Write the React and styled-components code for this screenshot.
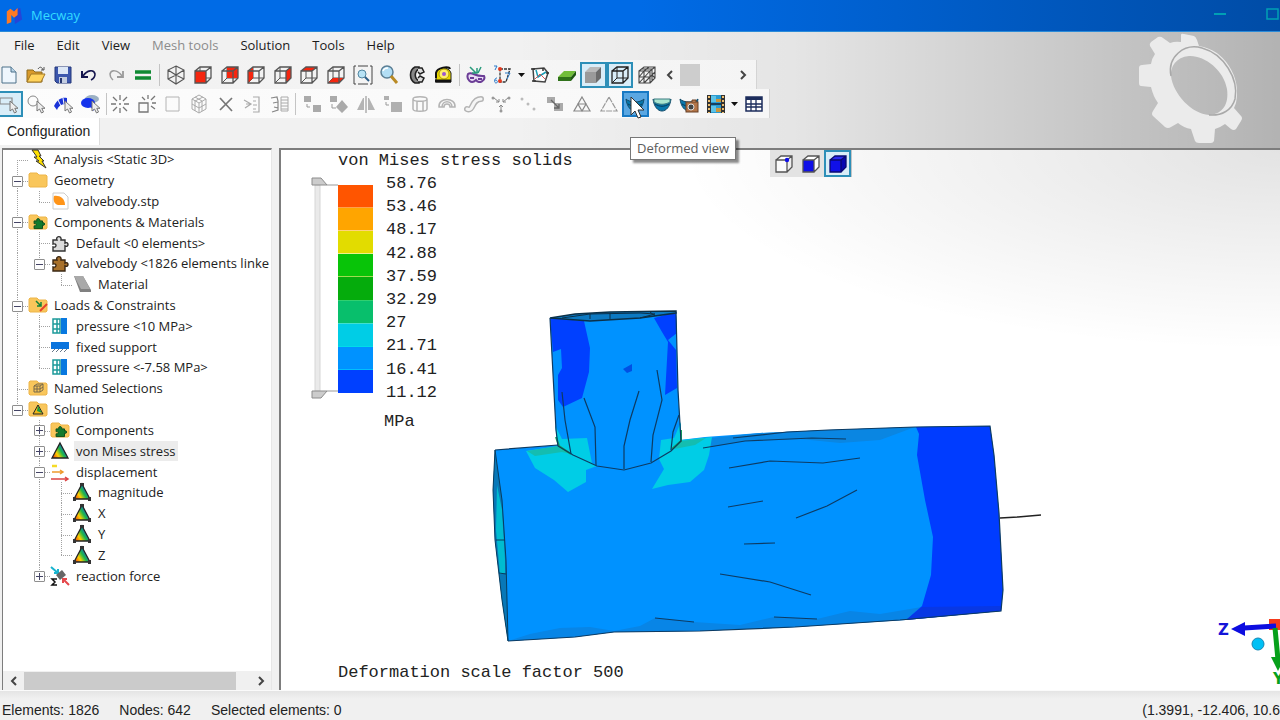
import React from 'react';
import styled, { createGlobalStyle, css } from 'styled-components';

const GlobalStyle = createGlobalStyle`
  * { box-sizing: border-box; }
  body {
    margin: 0;
    overflow: hidden;
    background: #f0f0f0;
  }
  button { font: inherit; color: inherit; }
`;

const Window = styled.div`
  display: flex;
  flex-direction: column;
  min-height: 100vh;
  overflow: hidden;
  color: #222;
  font-family: "Open Sans", "Noto Sans", sans-serif;
  font-size: 13px;
`;

const TitleBar = styled.header`
  display: flex;
  align-items: center;
  height: 32px;
  padding-left: 5px;
  gap: 8px;
  background: linear-gradient(to right, #006be6 50%, #005fcd 70%, #004ca6);
  border-bottom: 1px solid #2b8bd8;
  color: #35dcff;
  white-space: nowrap;
`;

const AppName = styled.h1`
  flex: 1;
  margin: 0;
  padding-bottom: 2px;
  font-size: 13px;
  font-weight: 400;
  line-height: 20px;
`;

const WindowButton = styled.button`
  display: flex;
  align-items: center;
  justify-content: flex-end;
  flex: none;
  width: ${props => props.$width}px;
  height: 28px;
  padding: 0 0 2px;
  border: none;
  background: transparent;
  color: #00a0b4;
`;

const Chrome = styled.div`
  position: relative;
  background: linear-gradient(to right, rgba(0, 0, 0, 0) 40%, rgba(0, 0, 0, 0.05) 62%, rgba(0, 0, 0, 0.17) 84%, rgba(0, 0, 0, 0.26)), #f1f1f1;
`;

const Watermark = styled.svg`
  position: absolute;
  right: 36px;
  top: 1px;
`;

const MenuBar = styled.nav`
  display: flex;
  height: 28px;
  padding-left: 3px;
`;

const MenuItem = styled.button`
  padding: 0 11px 2px;
  border: none;
  background: transparent;
  color: ${props => (props.disabled ? '#8c8c8c' : '#1c1c1c')};
`;

const ToolRow = styled.div`
  display: flex;
  align-items: center;
  width: ${props => props.$width}px;
  height: 29px;
  margin-left: -4px;
  background: linear-gradient(to right, #f0f0f0, rgba(250, 250, 250, 0.7));
  border-right: 1px solid #d4d4d4;
  ${props => props.$light && css`
    background: linear-gradient(to right, #fcfcfc, rgba(250, 250, 250, 0.8));
  `}
`;

const ToolGroup = styled.div`
  display: grid;
  flex: none;
  grid-auto-flow: column;
  grid-auto-columns: 1fr;
  width: ${props => props.$width}px;
`;

const Divider = styled.span`
  flex: none;
  width: 1px;
  height: 22px;
  margin: 0 ${props => (props.$tight ? 0 : 3)}px 0 3px;
  background: #c4c4c4;
`;

const ToolButton = styled.button`
  position: relative;
  display: flex;
  align-items: center;
  justify-content: center;
  height: 26px;
  padding: 0;
  border: 2px solid transparent;
  background: transparent;
  ${props => props.$on && css`
    border-color: #2d8fb8;
    background: #d9edf8;
  `}
  ${props => props.$hot && css`
    border-color: #1779c4;
    background: #5aa7e2;
  `}
`;

const SmallButton = styled.button`
  display: flex;
  align-items: center;
  justify-content: center;
  flex: none;
  width: ${props => props.$width}px;
  height: 18px;
  padding: 0;
  border: none;
  background: transparent;
`;

const Stepper = styled.div`
  display: flex;
  align-items: center;
  flex: 1;
  padding: 0 6px 0 3px;
  gap: 3px;
`;

const StepThumb = styled.span`
  width: 20px;
  height: 22px;
  margin-right: auto;
  background: #cdcdcd;
`;

const Cursor = styled.svg`
  position: absolute;
  left: 6px;
  top: 3px;
  z-index: 3;
`;

const Tooltip = styled.div`
  position: absolute;
  left: 630px;
  bottom: -12px;
  z-index: 4;
  padding: 0 6px;
  border: 1px solid #777;
  background: #fff;
  box-shadow: 3px 3px 2px rgba(0, 0, 0, 0.45);
  color: #5c5c5c;
  line-height: 21px;
`;

const TabStrip = styled.div`
  display: flex;
  height: 30px;
  padding-bottom: 3px;
`;

const Tab = styled.button`
  padding: 0 9px 1px 7px;
  border: none;
  border-right: 1px solid #ddd;
  background: #fff;
  font-family: "Liberation Sans", Arial, sans-serif;
  font-size: 14px;
`;

const Workspace = styled.main`
  display: flex;
  flex: 1;
  gap: 7px;
  padding-left: 2px;
`;

const SidePanel = styled.aside`
  display: flex;
  flex-direction: column;
  justify-content: space-between;
  flex: none;
  width: 270px;
  border-top: 2px solid #7d7d7d;
  border-left: 1px solid #7d7d7d;
  border-right: 1px solid #e6e6e6;
  background: #fff;
`;

const Tree = styled.ul`
  display: grid;
  grid-auto-rows: 1fr;
  height: 437px;
  margin: -1px 0 0;
  padding: 0 0 0 3px;
  overflow: hidden;
  list-style: none;
`;

const TreeRow = styled.li`
  display: flex;
  align-items: stretch;
  white-space: nowrap;
`;

const dots = (to) => `repeating-linear-gradient(${to}, #a2a2a2 0 1px, transparent 1px 2px)`;

// $line: "|" runs through, "T" branches, "L" ends here, "F" starts here
const Guide = styled.span`
  display: flex;
  align-items: center;
  justify-content: center;
  flex: none;
  width: 22px;
  background-repeat: no-repeat;
  ${props => props.$line === '|' && css`
    background-image: ${dots('to bottom')};
    background-size: 1px 100%;
    background-position: 11px 0;
  `}
  ${props => props.$line === 'T' && css`
    background-image: ${dots('to bottom')}, ${dots('to right')};
    background-size: 1px 100%, 11px 1px;
    background-position: 11px 0, 11px 11px;
  `}
  ${props => props.$line === 'L' && css`
    background-image: ${dots('to bottom')}, ${dots('to right')};
    background-size: 1px 11px, 11px 1px;
    background-position: 11px 0, 11px 11px;
  `}
  ${props => props.$line === 'F' && css`
    background-image: ${dots('to bottom')}, ${dots('to right')};
    background-size: 1px 11px, 11px 1px;
    background-position: 11px 11px, 11px 11px;
  `}
`;

const Expander = styled.button`
  display: flex;
  align-items: center;
  justify-content: center;
  width: 11px;
  height: 11px;
  margin-top: 2px;
  padding: 0;
  border: 1px solid #8f8f8f;
  border-radius: 1px;
  background: #fdfdfd;
`;

const NodeIcon = styled.span`
  display: flex;
  align-items: center;
  flex: none;
  width: 20px;
  margin-right: 4px;
`;

const NodeLabel = styled.span`
  align-self: center;
  padding: 0 2px;
  line-height: 20px;
  background: ${props => (props.$selected ? '#ececec' : 'transparent')};
`;

const ScrollBar = styled.div`
  display: flex;
  align-items: center;
  height: 19px;
  background: #f0f0f0;
`;

const ScrollTrack = styled.div`
  display: flex;
  flex: 1;
  height: 18px;
  padding-right: 14px;
`;

const ScrollThumb = styled.span`
  flex: 1;
  background: #cbcbcb;
`;

const Viewport = styled.section`
  position: relative;
  display: flex;
  flex-direction: column;
  flex: 1;
  min-width: 0;
  border-top: 2px solid #7d7d7d;
  border-left: 2px solid #7d7d7d;
  background: radial-gradient(ellipse 600px 200px at 100% 0, rgba(0, 0, 0, 0.11), rgba(0, 0, 0, 0)), #fff;
  font-family: "Liberation Mono", "Courier New", monospace;
  font-size: 17px;
`;

const Scene = styled.svg`
  position: absolute;
  left: 0;
  top: 0;
  width: 100%;
  height: 100%;
`;

const PlotLine = styled.p`
  margin: 0;
  padding-left: ${props => props.$inset}px;
  line-height: 22px;
  ${props => props.$bottom && css`
    margin-top: auto;
    margin-bottom: 6px;
  `}
`;

const Legend = styled.div`
  display: flex;
  padding-left: 30px;
  margin-bottom: 7px;
`;

const RangeMark = styled.svg`
  margin: 5px 0 0;
`;

const Bands = styled.div`
  display: flex;
  flex-direction: column;
  width: 35px;
  height: 208px;
  margin: 13px 13px 0 0;
`;

const Band = styled.span`
  flex: 1;
  border-bottom: 1px solid ${props => props.$edge};
  background: ${props => props.$color};
`;

const Values = styled.ol`
  display: grid;
  grid-auto-rows: 1fr;
  height: 232px;
  margin: 0;
  padding: 0;
  list-style: none;
  line-height: 23px;
`;

const ViewTools = styled.div`
  position: absolute;
  left: 489px;
  top: 0;
  display: flex;
  background: #e3e3e3;
  border-right: 1px solid #c4c4c4;

  button { width: 27px; height: 27px; }
`;

const StatusBar = styled.footer`
  display: flex;
  align-items: center;
  height: 30px;
  padding: 8px 0 0 2px;
  gap: 20px;
  border-top: 1px solid #fafafa;
  background: linear-gradient(#e4e4e4, #f0f0f0 8px);
  font-family: "Liberation Sans", Arial, sans-serif;
  font-size: 14px;
  white-space: nowrap;
`;

const Coordinates = styled.span`
  margin-left: auto;
`;

const Svg = ({ size = 20, children, ...rest }) => (
  <svg width={size} height={size} viewBox="0 0 20 20" fill="none" aria-hidden="true" {...rest}>
    {children}
  </svg>
);

const FACES = {
  front: '2 6 13 6 13 18 2 18',
  back: '7 2 18 2 18 13 7 13',
  left: '2 6 7 2 7 13 2 18',
  right: '13 6 18 2 18 13 13 18',
  top: '2 6 7 2 18 2 13 6',
  bottom: '2 18 7 13 18 13 13 18',
};

const Cube = ({ face, color = '#f5260f', line = '#555', open = true, fills = {}, node }) => (
  <Svg>
    {Object.keys(fills).map(f => <polygon key={f} points={FACES[f]} fill={fills[f]} />)}
    {open && <path d="M7 2v11H18M7 13L2 18" stroke={line} />}
    {face && <polygon points={FACES[face]} fill={color} />}
    <path d="M2 6H13V18H2ZM2 6L7 2H18V13L13 18M13 6L18 2" stroke={line} strokeWidth="1.300" />
    {node && <circle cx="13" cy="6" r="2.200" fill="#1010e8" />}
  </Svg>
);

const Pointer = ({ x = 0, y = 0 }) => (
  <path transform={`translate(${x} ${y})`} d="M0 0V10L2.500 8L4.500 12L6.500 11L4.800 7.300H8Z" fill="#eee" stroke="#777" />
);

const Bowl = () => (
  <>
    <path d="M1 5C5 9 15 9 19 5C18 13 14 17 10 17S2 13 1 5Z" fill="#0878ad" stroke="#124a68" />
    <path d="M3 10C8 13 12 13 17 10" stroke="#073a5a" />
  </>
);

const PUZZLE = 'M3 7H7C5 3 12 2 11 7H15V10C19 8 19 15 15 13V18H3V14C7 15 7 10 3 11Z';

const art = {
  newFile: <Svg><path d="M3 2H12L17 7V18H3Z" fill="#eef6fd" stroke="#4d7089" /><path d="M12 2V7H17" fill="#b9d3e6" stroke="#4d7089" /></Svg>,
  open: <Svg><path d="M1 17V5H7L9 7H16V17Z" fill="#d99a2b" stroke="#8d6a1e" /><path d="M1 17L5 9H19L15 17Z" fill="#ffd35c" stroke="#a27825" /><path d="M12 4C14 1 16 2 17 5M15 5H18V2" stroke="#555" /></Svg>,
  save: <Svg><path d="M2 2H18V18H4L2 16Z" fill="#3c57ad" stroke="#25387a" /><path d="M5 2H15V9H5Z" fill="#dce7f6" /><path d="M6 12H14V18H6Z" fill="#c3cde0" /><path d="M7 13H9V18H7Z" fill="#26366f" /></Svg>,
  undo: <Svg><path d="M3 6V12H9" stroke="#16164e" strokeWidth="2" /><path d="M4 11C8 5 15 4 16 9C16 13 14 14 12 15" stroke="#16164e" strokeWidth="1.600" /></Svg>,
  redo: <Svg><path d="M17 6V12H11" stroke="#9a9a9a" strokeWidth="1.800" /><path d="M16 11C12 5 5 4 4 9C4 13 6 14 7 15" stroke="#9a9a9a" strokeWidth="1.500" /></Svg>,
  solve: <Svg><path d="M2 7H18M2 13H18" stroke="#0f8a33" strokeWidth="3.500" /></Svg>,
  iso: <Svg><path d="M10 1L18 5V14L10 19L2 14V5ZM2 5L10 10L18 5M10 10V19M10 1V10M2 14L10 10L18 14" stroke="#555" strokeWidth="1.100" /></Svg>,
  fit: <Svg><path d="M3 1H1V19H3M17 1H19V19H17M5 1H15M5 19H15" stroke="#444" /><circle cx="9" cy="9" r="4" fill="#b7e2f5" stroke="#5186a0" /><path d="M12 12L16 16" stroke="#2d5d86" strokeWidth="2" /></Svg>,
  zoom: <Svg><circle cx="8" cy="7" r="6" fill="#b2def5" stroke="#5b7f95" strokeWidth="1.500" /><path d="M4 6C5 3 8 3 9 3" stroke="#fff" strokeWidth="1.500" /><path d="M12 11L18 18" stroke="#b98a24" strokeWidth="3" /></Svg>,
  caliper: <Svg><path d="M13 2H9C3 5 3 15 9 18H13V16C8 13 8 7 13 4Z" stroke="#222" strokeWidth="1.600" fill="#888" /><path d="M12 3L16 3L18 7L14 9L12 7M12 17H16L18 13L14 11L12 13" stroke="#222" strokeWidth="1.500" fill="#ddd" /></Svg>,
  tape: <Svg><path d="M3 17V8C4 2 16 1 18 8V17Z" fill="#e9d800" stroke="#222" /><path d="M3 13V8C4 2 16 1 17 4" stroke="#111" strokeWidth="2" /><circle cx="11" cy="9" r="5" fill="#fff06a" stroke="#b09e00" /><circle cx="11" cy="9" r="2" fill="#9b58d0" /><path d="M2 16H18" stroke="#111" strokeWidth="3" /></Svg>,
  mask: <Svg><path d="M2 9C6 6 9 12 18 11C20 15 13 20 10 15C5 20 0 14 2 9Z" stroke="#6b3d96" fill="#eadcf5" strokeWidth="2" /><path d="M4 13H8M12 14H16" stroke="#6b3d96" strokeWidth="2" /><path d="M4 2L10 8M15 2L12 8M6 8H11V3" stroke="#2a9b7c" strokeWidth="1.500" /></Svg>,
  nodes: <Svg><path d="M7 4H17L13 17H7Z" stroke="#333" strokeWidth="1.300" strokeDasharray="3 1" /><circle cx="7" cy="4" r="2" fill="#e33a1f" /><circle cx="7" cy="16" r="2" fill="#e33a1f" /><path d="M1 1H4L2 5M12 8H17L14 14M4 13C1 13 1 18 3 18S5 15 2 15" stroke="#2878c8" /></Svg>,
  graph: <Svg><path d="M3 4L14 3L18 8L15 17L4 16Z" stroke="#444" strokeWidth="1.500" fill="#fff" /><path d="M6 5L8 12L16 7" stroke="#1d9db4" strokeWidth="1.500" /><path d="M5 14L10 9L15 14" stroke="#d35555" /><path d="M1 4H5M13 3V6M16 8H19M2 16H6" stroke="#333" strokeWidth="1.500" /></Svg>,
  slab: <Svg><path d="M1 12L7 6H19L14 12Z" fill="#72bd3a" /><path d="M1 12H14V16H1Z" fill="#2f711a" /><path d="M14 12L19 6V10L14 16Z" fill="#1f5712" /></Svg>,
  solid: <Svg><path d="M2 7L7 2H18L13 7Z" fill="#b9b9b9" /><path d="M2 7H13V18H2Z" fill="#9a9a9a" /><path d="M13 7L18 2V13L13 18Z" fill="#6b6b6b" /></Svg>,
  mesh: <Svg><path d="M2 6H13V18H2ZM2 6L7 2H18V13L13 18M13 6L18 2M2 12H13L18 7M7 6V18M4 4H15V16M12 2L7 6M2 18L13 6M2 12L7 6M7 18L13 12M15 10L18 13" stroke="#444" strokeWidth="1.100" /></Svg>,
  selRect: <Svg><path d="M1 4H13V10H1Z" stroke="#888" strokeWidth="1.200" /><Pointer x={11} y={7} /></Svg>,
  selCircle: <Svg><circle cx="7" cy="7" r="5" stroke="#888" /><Pointer x={11} y={7} /></Svg>,
  selFaces: <Svg><path d="M1 12C5 4 10 3 14 4V10C9 10 6 11 4 16Z" fill="#1a33d8" /><path d="M5 6L8 12M10 4L11 10" stroke="#fff" /><Pointer x={12} y={7} /></Svg>,
  selBody: <Svg><ellipse cx="12" cy="5" rx="7" ry="4" fill="#9bb0c4" /><ellipse cx="8" cy="9" rx="7" ry="5" fill="#1533ec" /><path d="M9 11H14V17Z" fill="#1533ec" /><Pointer x={12} y={7} /></Svg>,
  spark: <Svg><path d="M10 1V6M10 14V19M1 10H6M14 10H19M3 3L7 7M13 13L17 17M17 3L13 7M7 13L3 17" stroke="#777" strokeWidth="1.300" /><circle cx="10" cy="10" r="1" fill="#777" /></Svg>,
  newElement: <Svg><path d="M2 9H11V18H2Z" stroke="#777" strokeWidth="1.300" /><path d="M11 1V5M5 3L8 6M18 2L14 6M15 9H19M14 12L18 15" stroke="#777" strokeWidth="1.300" /></Svg>,
  square: <Svg><path d="M3 3H16V17H3Z" stroke="#b4b4b4" /></Svg>,
  hexa: <Svg><path d="M10 1L17 5V15L10 19L3 15V5ZM3 5L10 9L17 5M10 9V19M6 3L13 7V17M14 3L6 7V17M3 10L10 14L17 10" stroke="#aaa" /></Svg>,
  cross: <Svg><path d="M4 4L16 17M16 4L4 16" stroke="#777" strokeWidth="1.700" /></Svg>,
  merge: <Svg><path d="M2 6L9 10L3 14M9 10H4M11 3H17V18H11M11 7H14M11 11H15M11 15H14" stroke="#aaa" strokeWidth="1.200" /></Svg>,
  renumber: <Svg><path d="M2 4L8 3L9 7V16L3 18M9 8L4 9M9 14L5 13" stroke="#888" strokeWidth="1.200" /><path d="M12 3H19V17H12ZM12 6H19M12 9H19M12 12H19M12 15H19" stroke="#aaa" /></Svg>,
  move: <Svg><path d="M2 2H9V8H2ZM11 11H19V18H11Z" fill="#aaa" /><path d="M5 10V13H8" stroke="#999" /></Svg>,
  rotate: <Svg><path d="M1 2H8V8H1ZM13 6L19 13L13 19L7 13Z" fill="#aaa" /><path d="M3 10V14H7" stroke="#999" /></Svg>,
  mirror: <Svg><path d="M1 16L7 4H8V16ZM12 4H13L19 16H12Z" fill="#b4b4b4" /><path d="M10 2V19" stroke="#888" /></Svg>,
  scale: <Svg><path d="M1 2H6V6H1ZM8 8H19V18H8Z" fill="#b0b0b0" /><path d="M3 8V11H6" stroke="#999" /></Svg>,
  extrude: <Svg><path d="M3 5C3 2 17 2 17 5V15C17 18 3 18 3 15ZM3 5C3 8 17 8 17 5M7 7V17M13 7V17" stroke="#b4b4b4" strokeWidth="1.500" /></Svg>,
  revolve: <Svg><path d="M2 13C1 3 19 3 18 13H13C13 9 7 9 7 13ZM5 13C5 6 15 6 15 13" stroke="#b4b4b4" strokeWidth="1.500" /></Svg>,
  sweep: <Svg><path d="M3 15C10 18 7 5 17 5" stroke="#b4b4b4" strokeWidth="6" strokeLinecap="round" /><path d="M3 15C10 18 7 5 17 5" stroke="#f5f5f5" strokeWidth="3" strokeLinecap="round" /></Svg>,
  join: <Svg><path d="M3 4L8 8M17 4L12 8M10 18V11M8 13L10 11L12 13M5 8H8V5M15 8H12V5" stroke="#888" /><circle cx="2" cy="4" r="1.500" fill="#999" /><circle cx="18" cy="4" r="1.500" fill="#999" /><circle cx="10" cy="17" r="1.500" fill="#999" /></Svg>,
  points: <Svg><circle cx="4" cy="5" r="1.500" fill="#bbb" /><circle cx="10" cy="10" r="1.500" fill="#bbb" /><circle cx="16" cy="15" r="1.500" fill="#bbb" /></Svg>,
  refine: <Svg><path d="M2 3H10V9H2ZM9 9H18V17H9Z" fill="#aaa" /><path d="M6 6L14 14M14 10V14H9" stroke="#666" strokeWidth="1.300" /></Svg>,
  tri4: <Svg><path d="M10 3L18 17H2ZM6 10H14L10 17Z" stroke="#888" strokeWidth="1.200" /></Svg>,
  tri: <Svg><path d="M10 3L18 17H2Z" stroke="#999" strokeWidth="1.200" strokeDasharray="6 1" /></Svg>,
  deformed: <Svg><Bowl /></Svg>,
  undeformed: <Svg><Bowl /><path d="M2 5H18V8C13 11 7 11 2 8Z" fill="#a9e4cf" stroke="#3c7c83" /></Svg>,
  snapshot: <Svg><Bowl /><rect x="7" y="8" width="12" height="10" fill="#b47649" stroke="#684027" /><path d="M13 8V6H17V8" fill="#b47649" stroke="#684027" /><circle cx="12" cy="13" r="3" fill="#444" stroke="#ddd" /></Svg>,
  film: <Svg><path d="M1 1H19V19H1Z" fill="#333" /><path d="M5 1H15V19H5Z" fill="#2a9bd0" /><path d="M5 9H15V11H5Z" fill="#173f5e" /><path d="M5 2H10V8H5ZM5 12H10V18H5Z" fill="#5cc3e8" /><path d="M10 5H15V8H10ZM10 14H15V18H10Z" fill="#c8963c" /><path d="M3 2V19M17 2V19" stroke="#f0c070" strokeWidth="2" strokeDasharray="2 2" /></Svg>,
  table: <Svg><path d="M2 3H18V17H2Z" fill="#fff" stroke="#1c2d5c" strokeWidth="1.500" /><path d="M2 3H18V6H2Z" fill="#1c2d5c" /><path d="M2 10H18M2 13H18M7 4V17M12 4V17" stroke="#1c2d5c" strokeWidth="1.300" /></Svg>,
};

const Folder = ({ children }) => (
  <Svg>
    <path d="M1 4L2 3H9L11 5H18L19 6V16L18 17H2L1 16Z" fill="#f9c65b" stroke="#edb54a" />
    {children}
  </Svg>
);

const Puzzle = ({ fill = '#ddd', line = '#333' }) => (
  <path d={PUZZLE} fill={fill} stroke={line} strokeWidth="1.400" />
);

const StressTriangle = ({ nodes }) => (
  <Svg>
    <defs>
      <linearGradient id="contour" x1="0" y1="1" x2="1" y2="0.400">
        <stop offset="0" stopColor="#e51e10" />
        <stop offset="0.350" stopColor="#ffd000" />
        <stop offset="0.600" stopColor="#20b848" />
        <stop offset="0.900" stopColor="#1060d8" />
      </linearGradient>
    </defs>
    <path d="M10 2L18 17H2Z" fill="url(#contour)" stroke="#222" strokeWidth="1.300" />
    {nodes && <path d="M8 1H12V4H8ZM1 15H4V19H1ZM16 15H19V19H16Z" fill="#333" />}
  </Svg>
);

const Pressure = () => (
  <Svg>
    <path d="M11 2H17V18H11Z" fill="#0878e0" />
    <path d="M3 3H10V17H3ZM3 8H10M3 13H10M7 3V17" stroke="#1d9a9a" strokeWidth="1.500" />
  </Svg>
);

const nodeArt = {
  analysis: <Svg><path d="M4 1H10L13 7H11L16 12H14L18 19L8 12H11L6 8H9Z" fill="#ffe100" stroke="#333" /></Svg>,
  folder: <Folder />,
  stp: <Svg><path d="M3 2H14L18 6V18H3Z" fill="#fff" stroke="#ccc" /><path d="M4 5C9 4 15 7 15 14H8C4 13 3 9 4 5Z" fill="#ff9418" /></Svg>,
  components: <Folder><g transform="translate(4 4) scale(0.700)"><Puzzle fill="#127a2c" line="#0b4d1b" /></g></Folder>,
  part: <Svg><Puzzle /></Svg>,
  partBrown: <Svg><Puzzle fill="#a8712b" line="#3a2713" /></Svg>,
  material: <Svg><path d="M2 2H11L19 16V18H8Z" fill="#808080" /><path d="M2 2H11L18 15H9Z" fill="#a9a9a9" /></Svg>,
  loads: <Folder><path d="M8 6L13 11M13 7V11H9" stroke="#11823a" strokeWidth="1.500" /><path d="M12 16L19 9" stroke="#e5412a" strokeWidth="2" /></Folder>,
  pressure: <Pressure />,
  support: <Svg><path d="M1 5H19V12H1Z" fill="#0a74dd" /><path d="M2 15L5 12M6 15L9 12M10 15L13 12M14 15L17 12" stroke="#678" /></Svg>,
  named: <Folder><path d="M6 8H12V14H6ZM6 8L9 6H15V12L12 14M12 8L15 6M6 11H12L15 9M9 8V14" stroke="#77684a" /></Folder>,
  solution: <Folder><path d="M10 6L15 15H5Z" fill="#f2b818" stroke="#222" /><path d="M10 7L14 14L9 12Z" fill="#179a41" /></Folder>,
  stress: <StressTriangle />,
  scalar: <StressTriangle nodes />,
  displacement: <Svg><path d="M2 4H7" stroke="#f5db28" strokeWidth="2.500" /><path d="M2 10H13M10 8L13 10L10 12" stroke="#ee9a2e" strokeWidth="1.500" /><path d="M1 17H18M15 15L18 17L15 19" stroke="#dc4444" strokeWidth="1.500" /></Svg>,
  reaction: <Svg><path d="M1 1L8 7M8 3V7H4" stroke="#18b4cf" strokeWidth="2" /><path d="M6 9L12 4L16 9L10 14Z" fill="#666" /><path d="M19 19L13 13M13 17V13H17" stroke="#e5484c" strokeWidth="2" /><path d="M7 13H2L5 16L2 19H7" stroke="#111" strokeWidth="1.500" /></Svg>,
};

const nodes = [
  ['F', 'analysis', 'Analysis <Static 3D>'],
  ['T', 'folder', 'Geometry', '-'],
  ['|L', 'stp', 'valvebody.stp'],
  ['T', 'components', 'Components & Materials', '-'],
  ['|T', 'part', 'Default <0 elements>'],
  ['|L', 'partBrown', 'valvebody <1826 elements linke', '-'],
  ['| L', 'material', 'Material'],
  ['T', 'loads', 'Loads & Constraints', '-'],
  ['|T', 'pressure', 'pressure <10 MPa>'],
  ['|T', 'support', 'fixed support'],
  ['|L', 'pressure', 'pressure <-7.58 MPa>'],
  ['T', 'named', 'Named Selections'],
  ['L', 'solution', 'Solution', '-'],
  [' T', 'components', 'Components', '+'],
  [' T', 'stress', 'von Mises stress', '+'],
  [' T', 'displacement', 'displacement', '-'],
  [' |T', 'scalar', 'magnitude'],
  [' |T', 'scalar', 'X'],
  [' |T', 'scalar', 'Y'],
  [' |L', 'scalar', 'Z'],
  [' L', 'reaction', 'reaction force', '+'],
];

const bands = [
  ['#ff5500', '#ffa04a'],
  ['#ffa500', '#ffd27a'],
  ['#e2dc00', '#eef08a'],
  ['#08c408', '#a0dc50'],
  ['#05ac0c', '#30d070'],
  ['#08bf6c', '#40e0d0'],
  ['#00cde6', '#00dcea'],
  ['#0092ff', '#00c0ff'],
  ['#0040ff', '#0040ff'],
];

const values = ['58.76', '53.46', '48.17', '42.88', '37.59', '32.29', '27', '21.71', '16.41', '11.12'];

const Tools = ({ width, items }) => (
  <ToolGroup $width={width}>
    {items.map(([name, label, on]) => (
      <ToolButton key={label} type="button" aria-label={label} $on={on}>
        {typeof name === 'string' ? art[name] : name}
      </ToolButton>
    ))}
  </ToolGroup>
);

const Caret = ({ label }) => (
  <SmallButton type="button" $width={11} aria-label={label}>
    <svg width="7" height="4" viewBox="0 0 7 4"><path d="M0 0H7L3.500 4Z" fill="#111" /></svg>
  </SmallButton>
);

const Chevron = ({ right }) => (
  <svg width="8" height="10" viewBox="0 0 8 10" fill="none">
    <path d={right ? 'M2 1L6 5L2 9' : 'M6 1L2 5L6 9'} stroke="#444" strokeWidth="2" />
  </svg>
);

const TreeNode = ({ node: [lines, icon, label, toggle] }) => (
  <TreeRow role="treeitem" aria-level={lines.length} aria-expanded={toggle ? toggle === '-' : undefined}>
    {lines.split('').map((line, i) => (
      <Guide key={i} $line={line}>
        {toggle && i === lines.length - 1 && (
          <Expander type="button" aria-label={`Toggle ${label}`}>
            <svg width="7" height="7" viewBox="0 0 7 7">
              <path d={toggle === '+' ? 'M0 3H7V4H0ZM3 0H4V7H3Z' : 'M0 3H7V4H0Z'} fill="#446" />
            </svg>
          </Expander>
        )}
      </Guide>
    ))}
    <NodeIcon>{nodeArt[icon]}</NodeIcon>
    <NodeLabel $selected={label === 'von Mises stress'}>{label}</NodeLabel>
  </TreeRow>
);

const Gear = () => (
  <Watermark width="106" height="112" viewBox="1138 33 106 112" aria-hidden="true">
    <path
      fillRule="evenodd"
      fill="#ebebeb"
      d="M1181 35Q1181 33 1184 34L1194 36Q1196 37 1197 40L1199 46Q1218 49 1229 66Q1240 83 1236 103L1234 108L1241 116Q1243 118 1241 121L1236 129Q1234 131 1231 129L1225 124Q1221 127 1215 129L1214 141Q1213 143 1211 143L1199 143Q1196 143 1195 141L1191 129Q1184 128 1178 123L1171 127Q1168 129 1165 127L1153 116Q1151 114 1153 111L1158 103Q1153 96 1151 87L1141 86Q1139 86 1139 83V68Q1139 65 1142 65L1151 64Q1152 58 1155 54L1150 46Q1149 44 1151 42L1158 37Q1161 36 1163 38L1170 43Q1175 41 1181 42ZM1189 56C1176 57 1170 67 1171 76C1173 94 1192 114 1209 115C1223 114 1229 104 1227 89C1224 70 1204 55 1189 56Z"
    />
    <path d="M1171 76C1167 57 1184 43 1202 48C1224 54 1239 79 1235 99C1232 110 1222 116 1209 115" fill="none" stroke="#a9a9a9" strokeWidth="1.500" />
  </Watermark>
);

const Model = () => (
  <Scene viewBox="281 150 999 540" preserveAspectRatio="xMinYMin meet" role="img" aria-label="Valve body stress plot">
    {/* main pipe */}
    <path d="M495 450L558 445L680 440L705 437L760 433L828 430L915 427L990 426L994 455L999 513L1003 590L1001 611L900 620L795 627L700 631L614 632L575 637L508 641L502 600L495 540L493 490Z" fill="#0092ff" />
    <path d="M712 438L760 433L828 430L915 427L880 440L840 443L800 439L745 441L705 448Z" fill="#0a86e2" />
    <path d="M508 641L530 634L560 628L590 627L614 631L640 626L655 618L694 622L740 625L774 617L817 619L850 611L880 614L922 607L906 620L795 627L700 631L614 632L575 637Z" fill="#0885e6" />
    <path d="M916 427L990 426L994 455L999 513L1003 590L1001 611L906 620L922 606L931 575L933 537L925 500L917 455L919 434Z" fill="#003cff" />
    <path d="M922 607L1001 606V611L906 620Z" fill="#0838e4" />
    {/* open left end */}
    <path d="M495 450L502 500L506 560L508 641L502 600L495 540L493 490Z" fill="#0878b8" />
    <path d="M497 485L502 510L505 560V573L500 574L496 530Z" fill="#00bcd0" />
    <path d="M495 450L502 500L506 560L508 641L502 600L495 540L493 490ZM496 540H505M499 573L506 574" fill="none" stroke="#083d5e" />
    {/* branch */}
    <path d="M550 318L556 430L558 446L573 455L597 466L624 470L651 463L671 451L681 441L678 390L676 312Z" fill="#0092ff" />
    <path d="M550 318L584 321L590 348L589 372L582 398L563 407L558 400L558 375L562 368L561 349L553 352Z" fill="#0040ff" />
    <path d="M654 318L676 312L677 333L668 340L676 350L677 388L665 395L668 342L662 332Z" fill="#0040ff" />
    <path d="M623 369L632 364V371L627 373Z" fill="#0050e4" />
    <path d="M526 451L558 446L555 425L562 439L587 438L592 463L597 466L586 470L586 482L568 492L554 480L535 468Z" fill="#00cde6" />
    <path d="M681 422L674 438L661 440L659 459L664 469L652 489L668 485L690 482L704 470L709 455L712 437L681 440Z" fill="#00cde6" />
    <path d="M527 451L558 446L571 454L562 452L535 456ZM681 441L706 438L695 445L674 449Z" fill="#14bdb0" />
    <path d="M556 437L559 446L571 454M681 430V441L672 449" fill="none" stroke="#16a35c" strokeWidth="2" />
    <path d="M550 318L575 314L610 312L676 311V313L640 318L590 321Z" fill="#0c79c2" stroke="#0b3048" strokeWidth="1.500" />
    <path d="M562 318L590 314L640 313L655 314L640 318M590 314V319M610 313V319M650 312L655 316" fill="none" stroke="#0b3048" />
    {/* feature edges */}
    <g fill="none" stroke="#0d3b63" strokeWidth="1.200">
      <path d="M550 318L556 430L558 446L573 455L597 466L624 470L651 463L671 451L681 441L678 390L676 312" />
      <path d="M562 392L565 420L571 454M584 398L595 427L596 465M639 391L630 420L624 446V469M657 370L662 400L653 435L651 462M679 415L673 432L671 450" />
      <path d="M703 448L745 441L812 438L846 439M729 468L770 461L823 463L860 458M728 507L763 501M796 518L827 506L857 490M744 544L775 543M720 574L770 582L811 595M774 617L817 619M655 618L694 622" />
      <path d="M495 450L558 445M733 438L787 432L828 430L915 427L990 426L994 455L999 513L1003 590L1001 611L900 620L795 627L700 631L614 632L575 637L508 641" />
    </g>
    <path d="M1000 518L1018 517L1041 515" fill="none" stroke="#222" strokeWidth="1.500" />
    {/* axis triad */}
    <path d="M1269 619H1280V630H1269Z" fill="#f53a1c" />
    <path d="M1244 628L1276 626" stroke="#0d0de0" strokeWidth="5" />
    <path d="M1231 629L1245 622V636Z" fill="#0d0de0" />
    <path d="M1275 628L1278 660" stroke="#07a01b" strokeWidth="5" />
    <path d="M1271 657H1285L1278 671Z" fill="#07a01b" />
    <circle cx="1258" cy="644" r="6" fill="#00c0f5" stroke="#1587b5" />
    <g fontFamily="DejaVu Sans, sans-serif" fontSize="15" fontWeight="700">
      <text x="1218" y="635" fill="#1414d8">Z</text>
      <text x="1273" y="684" fill="#07a01b">Y</text>
    </g>
  </Scene>
);

export default function App() {
  return (
    <Window>
      <GlobalStyle />
      <TitleBar>
        <Svg size={18}>
          <path d="M10 3L17 1L19 14L11 19Z" fill="#2545d8" />
          <path d="M2 19V5L6 2L10 5L14 1V9L10 12L7 9V17Z" fill="#ff7a24" />
        </Svg>
        <AppName>Mecway</AppName>
        <WindowButton type="button" $width={52} aria-label="Minimize">
          <svg width="12" height="12" viewBox="0 0 12 12"><path d="M0 4H12V6H0Z" fill="currentColor" /></svg>
        </WindowButton>
        <WindowButton type="button" $width={46} aria-label="Maximize">
          <svg width="14" height="14" viewBox="0 0 14 14" fill="none"><path d="M1 1H12V11H1Z" stroke="currentColor" strokeWidth="1.500" /></svg>
        </WindowButton>
      </TitleBar>

      <Chrome>
        <MenuBar>
          <MenuItem type="button">File</MenuItem>
          <MenuItem type="button">Edit</MenuItem>
          <MenuItem type="button">View</MenuItem>
          <MenuItem type="button" disabled>Mesh tools</MenuItem>
          <MenuItem type="button">Solution</MenuItem>
          <MenuItem type="button">Tools</MenuItem>
          <MenuItem type="button">Help</MenuItem>
        </MenuBar>

        <ToolRow $width={761}>
          <Tools
            width={160}
            items={[['newFile', 'New'], ['open', 'Open'], ['save', 'Save'], ['undo', 'Undo'], ['redo', 'Redo'], ['solve', 'Solve']]}
          />
          <Divider />
          <Tools
            width={293}
            items={[
              ['iso', 'Isometric'],
              [<Cube face="front" />, 'Front'],
              [<Cube face="back" />, 'Back'],
              [<Cube face="left" />, 'Left'],
              [<Cube face="right" />, 'Right'],
              [<Cube face="top" />, 'Top'],
              [<Cube face="bottom" />, 'Bottom'],
              ['fit', 'Fit to window'],
              ['zoom', 'Zoom'],
              ['caliper', 'Measure distance'],
              ['tape', 'Tape measure'],
            ]}
          />
          <Divider />
          <Tools width={53} items={[['mask', 'Show and hide'], ['nodes', 'Node numbers']]} />
          <Caret label="More numbering" />
          <Tools
            width={133}
            items={[
              ['graph', 'Local axes'],
              ['slab', 'Shell thickness'],
              ['solid', 'Shaded', true],
              [<Cube line="#222" />, 'Edges', true],
              ['mesh', 'Element edges'],
            ]}
          />
          <Stepper>
            <SmallButton type="button" $width={14} aria-label="Previous step"><Chevron /></SmallButton>
            <StepThumb />
            <SmallButton type="button" $width={14} aria-label="Next step"><Chevron right /></SmallButton>
          </Stepper>
        </ToolRow>

        <ToolRow $width={774} $light>
          <Tools
            width={107}
            items={[['selRect', 'Rectangle select', true], ['selCircle', 'Circle select'], ['selFaces', 'Select faces'], ['selBody', 'Select bodies']]}
          />
          <Divider $tight />
          <Tools
            width={185}
            items={[
              ['spark', 'New node'], ['newElement', 'New element'], ['square', 'Quad'], ['hexa', 'Hexahedron'],
              ['cross', 'Delete'], ['merge', 'Merge nodes'], ['renumber', 'Renumber'],
            ]}
          />
          <Divider />
          <Tools
            width={323}
            items={[
              ['move', 'Move'], ['rotate', 'Rotate'], ['mirror', 'Mirror'], ['scale', 'Scale'],
              ['extrude', 'Extrude'], ['revolve', 'Revolve'], ['sweep', 'Sweep'], ['join', 'Join'],
              ['points', 'Insert points'], ['refine', 'Refine'], ['tri4', 'Refine triangles'], ['tri', 'Triangle'],
            ]}
          />
          <ToolGroup $width={107}>
            <ToolButton type="button" aria-label="Deformed view" aria-describedby="tip" $hot>
              {art.deformed}
              <Cursor width="16" height="24" viewBox="0 0 16 24">
                <path d="M1 1V19L5 15L8 22L11 21L8 14H14Z" fill="#fff" stroke="#333" />
              </Cursor>
            </ToolButton>
            <ToolButton type="button" aria-label="Undeformed view">{art.undeformed}</ToolButton>
            <ToolButton type="button" aria-label="Snapshot">{art.snapshot}</ToolButton>
            <ToolButton type="button" aria-label="Animate">{art.film}</ToolButton>
          </ToolGroup>
          <Caret label="Animation options" />
          <Tools width={27} items={[['table', 'Table']]} />
        </ToolRow>

        <TabStrip role="tablist">
          <Tab type="button" role="tab" aria-selected="true">Configuration</Tab>
        </TabStrip>
        <Tooltip role="tooltip" id="tip">Deformed view</Tooltip>
        <Gear />
      </Chrome>

      <Workspace>
        <SidePanel>
          <Tree role="tree">
            {nodes.map((node, i) => <TreeNode key={i} node={node} />)}
          </Tree>
          <ScrollBar>
            <SmallButton type="button" $width={21} aria-label="Scroll left"><Chevron /></SmallButton>
            <ScrollTrack><ScrollThumb /></ScrollTrack>
            <SmallButton type="button" $width={21} aria-label="Scroll right"><Chevron right /></SmallButton>
          </ScrollBar>
        </SidePanel>

        <Viewport>
          <Model />
          <PlotLine $inset={57}>von Mises stress solids</PlotLine>
          <Legend>
            <RangeMark width="27" height="222" viewBox="0 0 27 222" fill="none">
              <path d="M4 8H9V214H4Z" fill="#eaeaea" stroke="#d6d6d6" />
              <path d="M1 1H10L16 8H1ZM1 214H16L10 221H1Z" fill="#ccc" stroke="#8c8c8c" />
              <path d="M16 8H27M16 214H27" stroke="#999" />
            </RangeMark>
            <Bands>
              {bands.map(([color, edge]) => <Band key={color} $color={color} $edge={edge} />)}
            </Bands>
            <Values>
              {values.map(v => <li key={v}>{v}</li>)}
            </Values>
          </Legend>
          <PlotLine $inset={103}>MPa</PlotLine>
          <PlotLine $inset={57} $bottom>Deformation scale factor 500</PlotLine>
          <ViewTools>
            <ToolButton type="button" aria-label="Select nodes">
              <Cube open={false} node fills={{ front: '#fafafa', top: '#fff', right: '#eee' }} />
            </ToolButton>
            <ToolButton type="button" aria-label="Select faces">
              <Cube open={false} face="front" color="#1010e8" fills={{ top: '#fff', right: '#fff' }} />
            </ToolButton>
            <ToolButton type="button" aria-label="Select elements" $on>
              <Cube open={false} face="front" color="#1010e8" line="#0a0a70" fills={{ top: '#2b2bf0', right: '#0808b0' }} />
            </ToolButton>
          </ViewTools>
        </Viewport>
      </Workspace>

      <StatusBar>
        <span>Elements: 1826</span>
        <span>Nodes: 642</span>
        <span>Selected elements: 0</span>
        <Coordinates>(1.3991, -12.406, 10.6</Coordinates>
      </StatusBar>
    </Window>
  );
}
